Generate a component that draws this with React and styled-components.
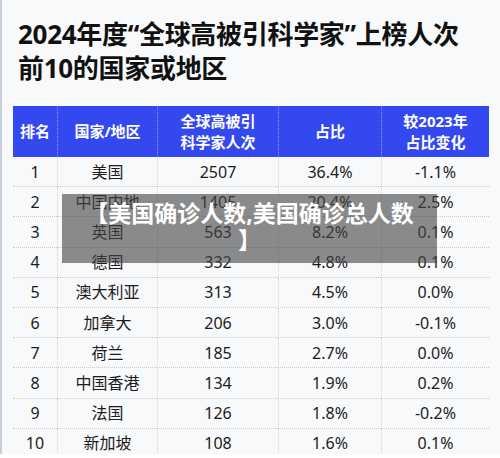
import React from "react";
import styled, { createGlobalStyle } from "styled-components";

const GlobalStyle = createGlobalStyle`
  html, body {
    margin: 0;
    padding: 0;
    background: #ffffff;
  }
  body {
    font-family: "Noto Sans", "Noto Sans CJK SC", sans-serif;
  }
`;

const Page = styled.div`
  width: 500px;
  height: 458px;
  overflow: hidden;
  background: #ffffff;
`;

const Card = styled.div`
  position: relative;
  height: 454px;
  overflow: hidden;
  background: #f8f9fb;
  border-left: 2px solid #c9cde0;
  padding: 0 11px 0 11px;
  box-sizing: border-box;
`;

const Title = styled.h1`
  margin: 0;
  padding: 17px 0 0 5px;
  height: 106px;
  box-sizing: border-box;
  font-size: 26px;
  line-height: 34px;
  font-weight: 700;
  color: #111111;
  letter-spacing: -0.3px;
`;

const Grid = styled.div`
  display: grid;
  grid-template-columns: 44px 100px 121px 103px 108px;
  width: 476px;
`;

const HeadCell = styled.div`
  height: 51px;
  display: flex;
  align-items: center;
  justify-content: center;
  text-align: center;
  background: #3348ee;
  color: #ffffff;
  font-size: 15px;
  font-weight: 700;
  line-height: 21px;
  border-left: ${(p) => (p.first ? "none" : "1px dotted #8b97f3")};
`;

const Cell = styled.div`
  height: 30.2px;
  display: flex;
  align-items: center;
  justify-content: center;
  font-size: 16px;
  line-height: 18px;
  color: #1c1c1c;
  border-bottom: 1px dotted #c9c9c9;
  border-left: ${(p) => (p.first ? "none" : "1px dotted #d4d4d4")};
  box-sizing: border-box;
`;

const Overlay = styled.div`
  position: absolute;
  left: 60px;
  top: 194px;
  width: 375px;
  height: 69px;
  background: rgba(70, 70, 70, 0.62);
  color: #ffffff;
  font-size: 23px;
  font-weight: 700;
  line-height: 27px;
  text-align: center;
  line-break: anywhere;
  padding: 6px 18px 0;
  box-sizing: border-box;
`;

const headers = [
  ["排名"],
  ["国家/地区"],
  ["全球高被引", "科学家人次"],
  ["占比"],
  ["较2023年", "占比变化"],
];

const rows = [
  ["1", "美国", "2507", "36.4%", "-1.1%"],
  ["2", "中国内地", "1405", "20.4%", "2.5%"],
  ["3", "英国", "563", "8.2%", "0.1%"],
  ["4", "德国", "332", "4.8%", "0.1%"],
  ["5", "澳大利亚", "313", "4.5%", "0.0%"],
  ["6", "加拿大", "206", "3.0%", "-0.1%"],
  ["7", "荷兰", "185", "2.7%", "0.0%"],
  ["8", "中国香港", "134", "1.9%", "0.2%"],
  ["9", "法国", "126", "1.8%", "-0.2%"],
  ["10", "新加坡", "108", "1.6%", "0.1%"],
];

export default function App() {
  return (
    <Page>
      <GlobalStyle />
      <Card>
        <Title>
          2024年度“全球高被引科学家”上榜人次
          <br />
          前10的国家或地区
        </Title>
        <Grid>
          {headers.map((h, i) => (
            <HeadCell key={i} first={i === 0}>
              <div>
                {h.map((line, j) => (
                  <div key={j}>{line}</div>
                ))}
              </div>
            </HeadCell>
          ))}
          {rows.map((r, ri) =>
            r.map((v, ci) => (
              <Cell key={ri + "-" + ci} first={ci === 0}>
                {v}
              </Cell>
            ))
          )}
        </Grid>
        <Overlay>【美国确诊人数,美国确诊总人数】</Overlay>
      </Card>
    </Page>
  );
}
